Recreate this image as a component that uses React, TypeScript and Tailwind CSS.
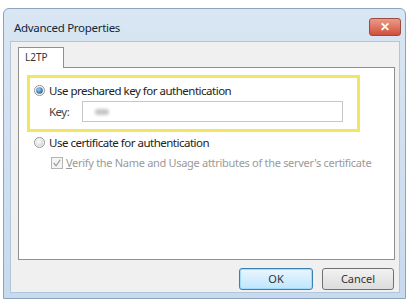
import React from "react";

const font = { fontFamily: '"Noto Sans", "Open Sans", sans-serif' };

function Radio({ checked }: { checked?: boolean }) {
  return (
    <svg width="11" height="11" viewBox="0 0 12 12" className="shrink-0">
      <defs>
        <radialGradient id={checked ? "rg1" : "rg0"} cx="0.4" cy="0.35" r="0.7">
          <stop offset="0" stopColor={checked ? "#9fd0f2" : "#ffffff"} />
          <stop offset="1" stopColor={checked ? "#1f5a9a" : "#d6d6d6"} />
        </radialGradient>
      </defs>
      <circle cx="6" cy="6" r="5.5" fill="#f4f4f4" stroke="#8f8f8f" strokeWidth="1" />
      {checked ? (
        <circle cx="6" cy="6" r="3.6" fill="url(#rg1)" />
      ) : (
        <circle cx="6" cy="6" r="4" fill="url(#rg0)" />
      )}
    </svg>
  );
}

export default function App() {
  return (
    <div className="w-[409px] h-[301px] bg-white overflow-hidden" style={font}>
      <div className="ml-[3px] mt-[8px] w-[403px] h-[291px] rounded-t-[6px] border border-[#8ea4bc] bg-gradient-to-b from-[#d9e6f3] to-[#c7daee] flex flex-col">
        {/* title bar */}
        <div className="h-[32px] flex items-center justify-between pl-[10px] pr-[4px]">
          <span className="text-[11.5px] tracking-[-0.3px] text-[#15253a] mt-[6px]">Advanced Properties</span>
          <div className="w-[32px] h-[18px] mt-[4px] rounded-[3px] border border-[#9a4a3e] bg-gradient-to-b from-[#eb9a8a] to-[#cf4f3a] flex items-center justify-center">
            <span className="text-white text-[12px] font-bold leading-none">✕</span>
          </div>
        </div>
        {/* client */}
        <div className="ml-[6px] mr-[5px] flex-1 mb-[5px] bg-[#f0f0f0] border border-[#b3c5d8] flex flex-col pl-[7px] pr-[4px] pt-[5px]">
          {/* tabs */}
          <div className="flex">
            <div className="w-[46px] h-[21px] bg-white border border-[#8e8f8f] border-b-0 text-[10px] text-[#333] pl-[6px] pt-[2px] relative z-10 -mb-px">
              L2TP
            </div>
          </div>
          <div className="h-[193px] bg-white border border-[#8e8f8f] pt-[7px] pl-[8px] text-[11.5px] tracking-[-0.5px] text-[#222]">
            <div className="w-[333px] h-[57px] border-[3px] border-[#f2e661] flex flex-col pl-[4px] pt-[5px]">
              <div className="flex items-center gap-[4px] h-[15px]">
                <Radio checked />
                <span>Use preshared key for authentication</span>
              </div>
              <div className="flex items-center mt-[3px] pl-[15px]">
                <span className="w-[33px] text-[#444]">Key:</span>
                <div className="w-[261px] h-[21px] border border-[#c8c8c8] bg-white flex items-center pl-[12px]">
                  <span className="w-[14px] h-[6px] rounded-full bg-[#c6c6c6] blur-[1.5px]" />
                </div>
              </div>
            </div>
            <div className="flex items-center gap-[4px] h-[15px] mt-[3px] pl-[7px]">
              <Radio />
              <span>Use certificate for authentication</span>
            </div>
            <div className="flex items-center gap-[3px] mt-[5px] pl-[24px] text-[#9a9a9a] text-[11px] tracking-[-0.3px]">
              <svg width="12" height="12" viewBox="0 0 13 13">
                <rect x="0.5" y="0.5" width="12" height="12" fill="#f4f4f4" stroke="#b0b0b0" />
                <path d="M3 6.5 L5.5 9.5 L10 3" fill="none" stroke="#9a9a9a" strokeWidth="1.3" />
              </svg>
              <span>
                <span className="underline">V</span>erify the Name and Usage attributes of the server's certificate
              </span>
            </div>
          </div>
          <div className="flex justify-end gap-[9px] mt-[8px] pr-[1px]">
            <div className="w-[74px] h-[22px] rounded-[3px] border border-[#3c7fb1] bg-gradient-to-b from-[#eaf6fd] to-[#bee6fd] shadow-[inset_0_0_0_1px_#9fdcfb] flex items-center justify-center text-[11px] text-[#333]">
              OK
            </div>
            <div className="w-[72px] h-[22px] rounded-[3px] border border-[#707070] bg-gradient-to-b from-[#f2f2f2] to-[#dcdcdc] flex items-center justify-center text-[11px] text-[#333]">
              Cancel
            </div>
          </div>
        </div>
      </div>
    </div>
  );
}
